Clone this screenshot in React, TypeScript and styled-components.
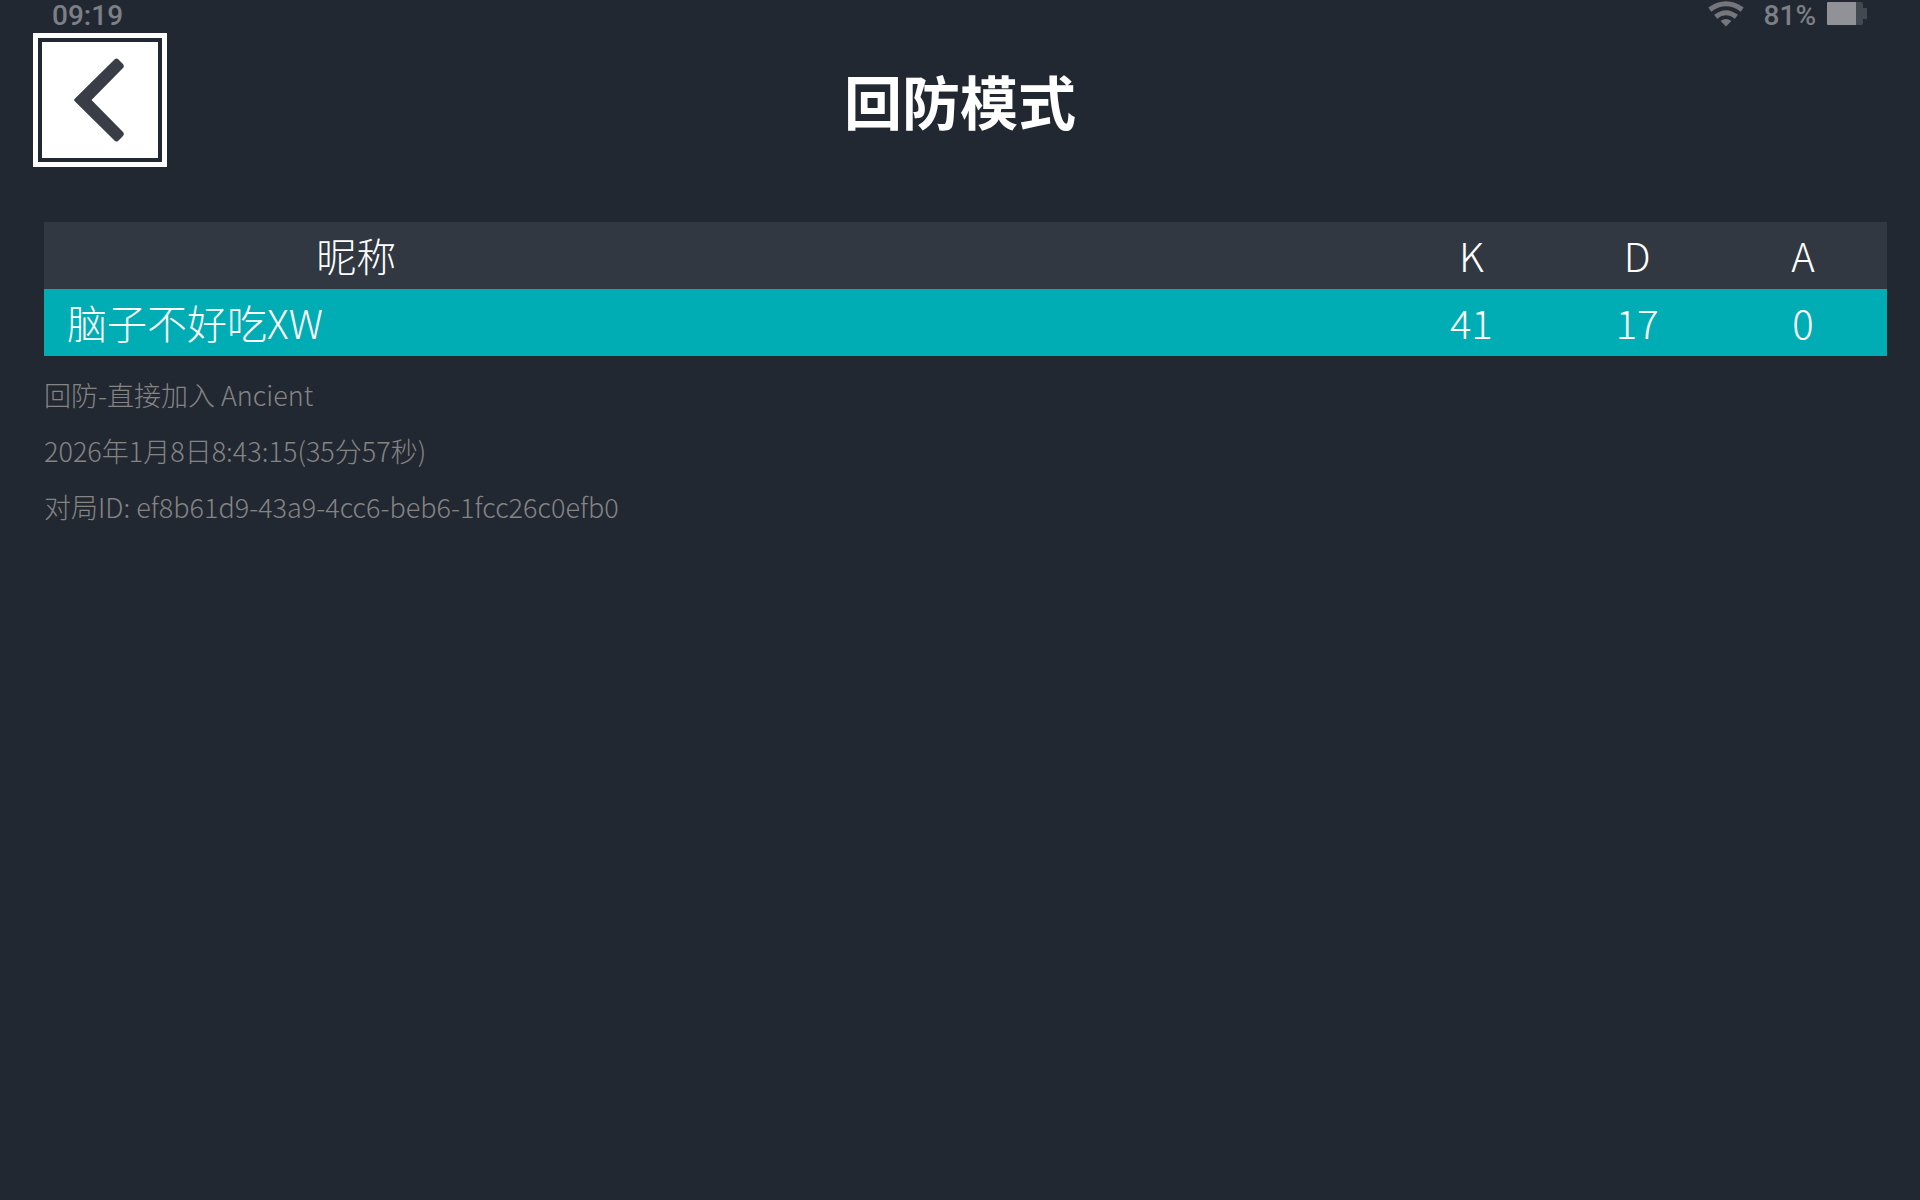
import React from "react";
import styled, { createGlobalStyle } from "styled-components";

const GlobalStyle = createGlobalStyle`
  * { box-sizing: border-box; }
  body {
    margin: 0;
    background: #222831;
    color: #ffffff;
    font-family: "Noto Sans CJK SC", "Noto Sans", sans-serif;
    font-weight: 300;
  }
`;

const Screen = styled.div`
  display: flex;
  flex-direction: column;
  min-height: 100vh;
`;

const StatusBar = styled.div`
  display: flex;
  align-items: center;
  justify-content: space-between;
  height: 33px;
  padding: 0 52px;
  color: #7c7f86;
  font: 500 28px/32px Roboto, sans-serif;
`;

const StatusGroup = styled.div`
  display: flex;
  align-items: flex-start;
`;

const StatusText = styled.span`
  height: 33px;
`;

const WifiIcon = styled.svg`
  display: block;
  width: 36px;
  height: 28px;
  margin-right: 20px;
`;

const BatteryIcon = styled.svg`
  display: block;
  width: 41px;
  height: 28px;
  margin-left: 11px;
`;

const Header = styled.header`
  display: grid;
  grid-template-columns: 134px 1fr 134px;
  padding: 0 33px;
`;

const BackButton = styled.button`
  width: 134px;
  height: 134px;
  padding: 4px;
  border: 5px solid #ffffff;
  background: #222831;
  cursor: pointer;
`;

const BackIcon = styled.svg`
  display: block;
  width: 100%;
  height: 100%;
  background: #ffffff;
`;

const Title = styled.h1`
  margin: 0;
  font-size: 58px;
  font-weight: 700;
  line-height: 134px;
  text-align: center;
`;

const Content = styled.main`
  padding: 55px 33px 0 44px;
`;

const ScoreTable = styled.table`
  width: 100%;
  table-layout: fixed;
  border-collapse: collapse;
  font-size: 40px;
  line-height: 67px;
`;

const Row = styled.tr<{ $active?: boolean }>`
  background: ${(p) => (p.$active ? "#00adb5" : "#323841")};
`;

const NameHeading = styled.th`
  width: 34%;
  padding: 0 2px 0 0;
  font-weight: 300;
`;

const Spacer = styled.td`
  padding: 0;
`;

const StatHeading = styled.th`
  width: 9%;
  padding: 0 2px 0 0;
  font-weight: 300;
`;

const NameCell = styled.td`
  padding: 0 0 0 23px;
`;

const StatCell = styled.td`
  padding: 0 2px 0 0;
  text-align: center;
`;

const MatchInfo = styled.section`
  padding-top: 11px;
  color: #848484;
`;

const InfoLine = styled.p`
  margin: 0;
  font-size: 27px;
  line-height: 56px;
`;

const stats = ["K", "D", "A"];
const players = [{ name: "脑子不好吃XW", scores: [41, 17, 0] }];
const details = [
  "回防-直接加入 Ancient",
  "2026年1月8日8:43:15(35分57秒)",
  "对局ID: ef8b61d9-43a9-4cc6-beb6-1fcc26c0efb0",
];

export default function App() {
  return (
    <Screen>
      <GlobalStyle />
      <StatusBar>
        <StatusText>09:19</StatusText>
        <StatusGroup>
          <WifiIcon viewBox="0 0 36 28" aria-hidden="true">
            <g fill="none" stroke="#74767c" strokeWidth="5">
              <path d="M1.8 9.6 Q18 -2 34.2 9.6" />
              <path d="M7.6 16.8 Q18 8.6 28.4 16.8" />
            </g>
            <path d="M12.6 21 Q18 17 23.4 21 L18 26.4 Z" fill="#74767c" />
          </WifiIcon>
          <StatusText>81%</StatusText>
          <BatteryIcon viewBox="0 0 41 28" aria-hidden="true">
            <path d="M29 2h5a2 2 0 0 1 2 2v4h4v11h-4v4a2 2 0 0 1-2 2h-5z" fill="#424951" />
            <path d="M1 2h28v23H1a1 1 0 0 1-1-1V3a1 1 0 0 1 1-1z" fill="#919298" />
          </BatteryIcon>
        </StatusGroup>
      </StatusBar>
      <Header>
        <BackButton type="button" aria-label="返回">
          <BackIcon viewBox="0 0 116 116" aria-hidden="true">
            <path
              d="M32.5 57 L73 17 Q74.5 16 76 17 L81 22 Q82.5 24 81.5 25.5 L49.5 58 L81.5 90.5 Q82.5 92 81 94 L76 99 Q74.5 100 73 99 L32.5 59 Q31.8 58 32.5 57 Z"
              fill="#393e46"
            />
          </BackIcon>
        </BackButton>
        <Title>回防模式</Title>
      </Header>
      <Content>
        <ScoreTable>
          <thead>
            <Row>
              <NameHeading scope="col">昵称</NameHeading>
              <Spacer />
              {stats.map((s) => (
                <StatHeading key={s} scope="col">{s}</StatHeading>
              ))}
            </Row>
          </thead>
          <tbody>
            {players.map((p) => (
              <Row key={p.name} $active>
                <NameCell colSpan={2}>{p.name}</NameCell>
                {p.scores.map((score, i) => (
                  <StatCell key={stats[i]}>{score}</StatCell>
                ))}
              </Row>
            ))}
          </tbody>
        </ScoreTable>
        <MatchInfo>
          {details.map((line) => (
            <InfoLine key={line}>{line}</InfoLine>
          ))}
        </MatchInfo>
      </Content>
    </Screen>
  );
}
